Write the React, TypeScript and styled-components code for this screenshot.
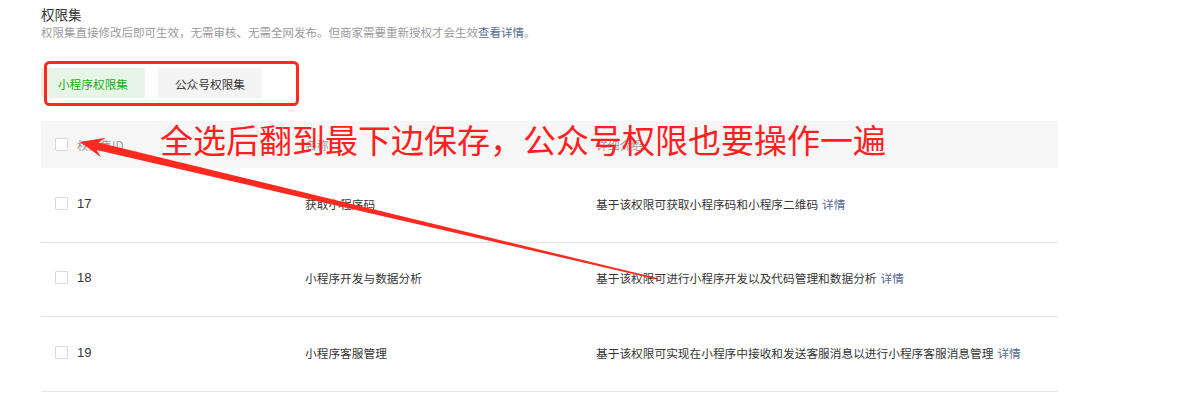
import styled, { createGlobalStyle } from "styled-components";

const GlobalStyle = createGlobalStyle`
  body {
    margin: 0;
    background: #fff;
    font-family: "Noto Sans CJK SC", "Liberation Sans", sans-serif;
    color: #353535;
  }
`;

const rows = [
  { id: 17, name: "获取小程序码", desc: "基于该权限可获取小程序码和小程序二维码" },
  { id: 18, name: "小程序开发与数据分析", desc: "基于该权限可进行小程序开发以及代码管理和数据分析" },
  { id: 19, name: "小程序客服管理", desc: "基于该权限可实现在小程序中接收和发送客服消息以进行小程序客服消息管理" },
];

const App = () => {
  return (
    <Page>
      <GlobalStyle />
      <Title>权限集</Title>
      <Desc>
        权限集直接修改后即可生效，无需审核、无需全网发布。但商家需要重新授权才会生效
        <Link>查看详情</Link>。
      </Desc>
      <Tabs>
        <Tab active>小程序权限集</Tab>
        <Tab>公众号权限集</Tab>
      </Tabs>
      <Table>
        <HeadRow>
          <Cell>
            <Check />
            权限集ID
          </Cell>
          <Cell>名称</Cell>
          <Cell>详细介绍</Cell>
        </HeadRow>
        {rows.map((r) => (
          <Row key={r.id}>
            <Cell>
              <Check />
              <Num>{r.id}</Num>
            </Cell>
            <Cell>{r.name}</Cell>
            <Cell>
              {r.desc}
              <DetailLink>详情</DetailLink>
            </Cell>
          </Row>
        ))}
      </Table>

      <Note>全选后翻到最下边保存，公众号权限也要操作一遍</Note>
      <Marks width="1183" height="411" viewBox="0 0 1183 411">
        <rect
          x="45.5"
          y="62.5"
          width="252"
          height="42"
          rx="4"
          fill="none"
          stroke="#ff2a1f"
          strokeWidth="3"
        />
        <polygon
          fill="#ff2a1f"
          points="80,142 105.7,137.8 98.4,142.6 658.2,278.3 657.8,279.7 96.6,150 101.1,157.2"
        />
      </Marks>
    </Page>
  );
};

export default App;

const Page = styled.div`
  position: relative;
  width: 1183px;
  height: 411px;
  box-sizing: border-box;
  padding-left: 41px;
  overflow: hidden;
`;

const Title = styled.div`
  padding-top: 4px;
  font-size: 13.5px;
  line-height: 20px;
  color: #353535;
`;

const Desc = styled.div`
  font-size: 11.5px;
  line-height: 16px;
  color: #9a9a9a;
`;

const Link = styled.span`
  color: #576b95;
`;

const DetailLink = styled(Link)`
  margin-left: 4px;
`;

const Tabs = styled.div`
  display: flex;
  gap: 13px;
  margin-top: 28px;
`;

const Tab = styled.div<{ active?: boolean }>`
  width: 104px;
  height: 30px;
  display: flex;
  align-items: center;
  justify-content: center;
  font-size: 11.7px;
  border-radius: 2px;
  background: ${(p) => (p.active ? "#e7f5e7" : "#f4f4f4")};
  color: ${(p) => (p.active ? "#1aad19" : "#353535")};
`;

const Table = styled.div`
  width: 1017px;
  margin-top: 23px;
  font-size: 11.7px;
`;

const HeadRow = styled.div`
  display: grid;
  grid-template-columns: 250px 291px 1fr;
  align-items: center;
  height: 47px;
  padding-left: 14px;
  background: #f6f6f6;
  color: #9a9a9a;
`;

const Row = styled.div`
  display: grid;
  grid-template-columns: 250px 291px 1fr;
  align-items: center;
  box-sizing: border-box;
  height: 74.5px;
  padding: 0 0 3px 14px;
  border-bottom: 1px solid #e5e5e5;
  color: #353535;
`;

const Cell = styled.div`
  display: flex;
  align-items: center;
  white-space: nowrap;
`;

const Check = styled.span`
  width: 11px;
  height: 11px;
  border: 1px solid #d9d9d9;
  border-radius: 1px;
  background: #fff;
  margin-right: 9px;
`;

const Num = styled.span`
  font-family: "Liberation Sans", sans-serif;
  font-size: 13px;
`;

const Note = styled.div`
  position: absolute;
  left: 160px;
  top: 120px;
  font-size: 33px;
  line-height: 38px;
  color: #ff2020;
  white-space: nowrap;
`;

const Marks = styled.svg`
  position: absolute;
  left: 0;
  top: 0;
  pointer-events: none;
`;
